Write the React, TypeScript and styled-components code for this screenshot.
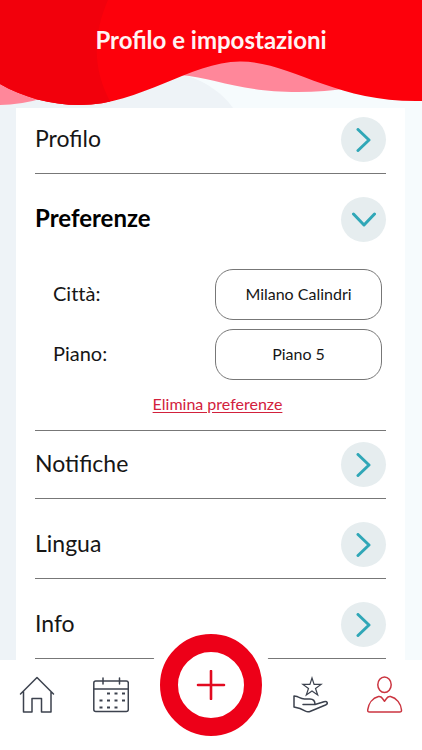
import React, { useState } from 'react';
import styled, { createGlobalStyle } from 'styled-components';

const GlobalStyle = createGlobalStyle`
  *, *::before, *::after { box-sizing: border-box; }
  body {
    margin: 0;
    color: #161616;
    font-family: Lato, "Open Sans", sans-serif;
  }
  button, select { font: inherit; color: inherit; }
`;

const Screen = styled.div`
  display: flex;
  flex-direction: column;
  min-height: 100vh;
  background: linear-gradient(90deg, #eef3f7 50%, #f6fbfd 50%);
`;

const Header = styled.header`
  position: relative;
  display: flex;
  justify-content: center;
  height: 108px;
  padding-top: 24px;
`;

const Waves = styled.svg`
  position: absolute;
  inset: 0;
  width: 100%;
  height: 100%;
`;

const Title = styled.h1`
  position: relative;
  margin: 0;
  color: #fff3f3;
  font-size: 24px;
  line-height: 32px;
  font-weight: 700;
`;

const Card = styled.main`
  flex: 1;
  margin: 0 17px 0 16px;
  padding: 0 19px;
  background: #fff;
`;

const Section = styled.section<{ $compact?: boolean }>`
  padding: ${(p) => (p.$compact ? 11 : 23)}px 0 11px;
  border-bottom: 1px solid #777;

  &:first-child { padding-top: 9px; }
`;

const Heading = styled.h2`
  margin: 0;
`;

const Toggle = styled.button<{ $open: boolean }>`
  display: flex;
  align-items: flex-start;
  justify-content: space-between;
  width: 100%;
  padding: 0;
  border: 0;
  background: none;
  text-align: left;
  font-size: ${(p) => (p.$open ? 24 : 23)}px;
  line-height: 42px;
  font-weight: ${(p) => (p.$open ? 700 : 400)};
  color: ${(p) => (p.$open ? '#000' : '#161616')};
  cursor: pointer;
`;

const Disc = styled.span<{ $open: boolean }>`
  display: grid;
  place-items: center;
  width: 45px;
  height: 45px;
  border-radius: 50%;
  background: #e6edef;

  svg { transform: rotate(${(p) => (p.$open ? 90 : 0)}deg); }
`;

const Preferences = styled.div`
  display: grid;
  gap: 9px;
  padding: 27px 4px 0 18px;
`;

const Field = styled.div`
  display: flex;
  align-items: flex-start;
  justify-content: space-between;
`;

const Label = styled.label`
  font-size: 20px;
  line-height: 48px;
  font-variant-ligatures: none;
`;

const Choice = styled.select`
  appearance: none;
  width: 167px;
  height: 51px;
  padding: 0 12px 3px;
  border: 1px solid #777;
  border-radius: 18px;
  background: #fff;
  font-size: 16px;
  text-align: center;
  text-align-last: center;
`;

const ClearLink = styled.a`
  justify-self: center;
  color: #d2213c;
  font-size: 16px;
  line-height: 30px;
  text-decoration: underline;
  text-underline-offset: 2px;
`;

const NavBar = styled.nav`
  position: sticky;
  bottom: 0;
  display: flex;
  justify-content: space-between;
  height: 90px;
  padding: 0 19px;
  background: #fff;
`;

const NavGroup = styled.div`
  display: flex;
  gap: 38px;
  padding-top: 16px;
`;

const NavLink = styled.a<{ $active?: boolean }>`
  width: 36px;
  height: 38px;
  color: ${(p) => (p.$active ? '#cb3540' : '#3c424e')};

  svg { display: block; }
`;

const AddButton = styled.button`
  display: grid;
  place-items: center;
  width: 102px;
  height: 102px;
  margin-top: -26px;
  padding: 0;
  border: 18px solid #ed0018;
  border-radius: 50%;
  background: #fff;
  box-shadow: 0 0 0 12px #fff;
  color: #e20a20;
  cursor: pointer;
`;

const Chevron = () => (
  <svg width="24" height="24" viewBox="0 0 24 24" fill="none" stroke="#30a7b7" strokeWidth="3" strokeLinecap="round" strokeLinejoin="round" aria-hidden="true">
    <path d="M6 1.500 17 12 6 22.500" />
  </svg>
);

const iconProps = {
  width: 36,
  height: 38,
  viewBox: '0 0 36 38',
  fill: 'none',
  stroke: 'currentColor',
  strokeWidth: 1.5,
  strokeLinecap: 'round' as const,
  strokeLinejoin: 'round' as const,
  'aria-hidden': true,
};

const HomeIcon = () => (
  <svg {...iconProps}>
    <path d="M1.500 18 18 1.500 34.500 18M4.500 15.500V36H13V22.500h9.500V36H32V15.500" />
  </svg>
);

const CalendarIcon = () => (
  <svg {...iconProps}>
    <rect x="0.800" y="5" width="34.500" height="30.500" rx="2" />
    <path d="M1 13h34M10 2v6M26.500 2v6" />
    <path strokeLinecap="butt" strokeWidth="1.800" d="M14 17.500h3M21.500 17.500h3M29 17.500h3M6.500 24.500h3M14 24.500h3M21.500 24.500h3M29 24.500h3M6.500 31.500h3M14 31.500h3M21.500 31.500h3" />
  </svg>
);

const RewardIcon = () => (
  <svg {...iconProps}>
    <path strokeWidth="1.200" strokeLinejoin="miter" d="m19 2 2.100 6.400h7L22.500 12.500l2.200 6.500L19 15l-5.700 4 2.200-6.500L9.900 8.400h7z" />
    <path d="M10 28.500H22C22 25 20.500 23 17 23H11.500C8 23 6.500 21.500 4 20.500L1 20V31L7 32.500 12.500 35.200C14.200 36 15.800 36 17.500 35.200L32.500 29C35.500 27.600 34.500 24.900 31 25.700L22 28.500" />
  </svg>
);

const UserIcon = () => (
  <svg {...iconProps}>
    <ellipse cx="17.500" cy="8.800" rx="6.700" ry="7.700" />
    <path d="M11.500 20.500c1.500-.4 3 .5 4 2l2 2.700 2-2.700c1-1.500 2.500-2.400 4-2C29.500 22 34 27.500 34.500 34c.1 1.500-.4 2-1.800 2H2.500C1.100 36 .6 35.500.7 34 1.500 27.500 5.500 22 11.500 20.500z" />
  </svg>
);

const sections = ['Profilo', 'Preferenze', 'Notifiche', 'Lingua', 'Info'];

export default function App() {
  const [open, setOpen] = useState('Preferenze');

  return (
    <>
      <GlobalStyle />
      <Screen>
        <Header>
          <Waves viewBox="0 0 422 108" preserveAspectRatio="none" aria-hidden="true">
            <defs>
              <clipPath id="wave">
                <path d="M0 0H422V101C335 103 290 61 240 61.500C190 62 140 105 80 105C50 105 23 97 0 84Z" />
              </clipPath>
            </defs>
            <path fill="#f6fbfd" d="M186 76C206 81 223 94 233 108H422V60H186Z" />
            <path fill="#eef3f7" d="M186 76C206 81 223 94 233 108H180V76Z" />
            <path fill="#ff879a" d="M0 70V105Q20 105 44 98ZM180 75C215 78 240 92 298 92Q325 92 350 88L240 50Z" />
            <g clipPath="url(#wave)">
              <path fill="#fd000b" d="M0 0H422V108H0Z" />
              <path fill="#f2000c" d="M0 0H108C94 32 90 69 114 108H0Z" />
            </g>
          </Waves>
          <Title>Profilo e impostazioni</Title>
        </Header>
        <Card>
          {sections.map((name) => {
            const isOpen = open === name;
            return (
              <Section key={name} $compact={name === 'Notifiche'}>
                <Heading>
                  <Toggle type="button" $open={isOpen} aria-expanded={isOpen} onClick={() => setOpen(isOpen ? '' : name)}>
                    {name}
                    <Disc $open={isOpen}><Chevron /></Disc>
                  </Toggle>
                </Heading>
                {isOpen && name === 'Preferenze' && (
                  <Preferences>
                    <Field>
                      <Label htmlFor="city">Città:</Label>
                      <Choice id="city"><option>Milano Calindri</option></Choice>
                    </Field>
                    <Field>
                      <Label htmlFor="floor">Piano:</Label>
                      <Choice id="floor"><option>Piano 5</option></Choice>
                    </Field>
                    <ClearLink href="#elimina">Elimina preferenze</ClearLink>
                  </Preferences>
                )}
              </Section>
            );
          })}
        </Card>
        <NavBar aria-label="Navigazione">
          <NavGroup>
            <NavLink href="#home" aria-label="Home"><HomeIcon /></NavLink>
            <NavLink href="#calendario" aria-label="Calendario"><CalendarIcon /></NavLink>
          </NavGroup>
          <AddButton type="button" aria-label="Aggiungi">
            <svg width="30" height="30" viewBox="0 0 30 30" stroke="currentColor" strokeWidth="2.600" strokeLinecap="round" aria-hidden="true">
              <path d="M15 1v28M2 15h26" />
            </svg>
          </AddButton>
          <NavGroup>
            <NavLink href="#premi" aria-label="Premi"><RewardIcon /></NavLink>
            <NavLink href="#profilo" aria-label="Profilo" $active><UserIcon /></NavLink>
          </NavGroup>
        </NavBar>
      </Screen>
    </>
  );
}
